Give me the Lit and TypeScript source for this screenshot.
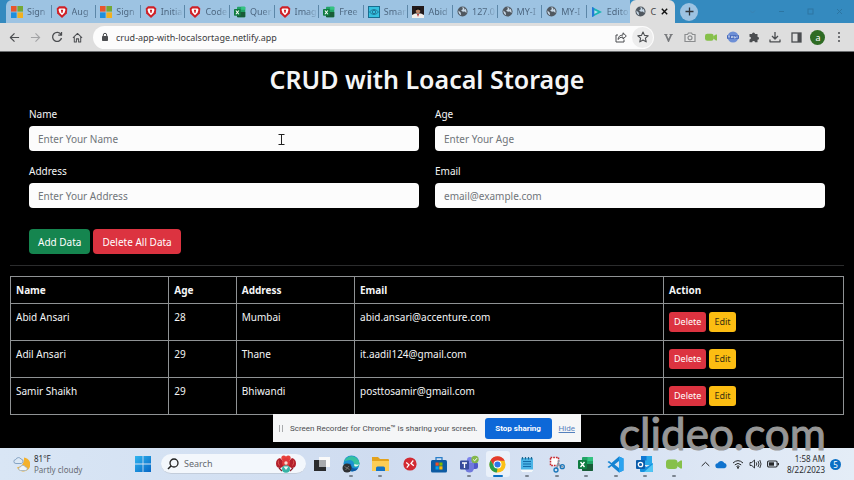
import { LitElement, html, svg, css, nothing } from "lit";
import { customElement } from "lit/decorators.js";
import { classMap } from "lit/directives/class-map.js";

const icon = (w: number, h: number, body: unknown, box = `0 0 ${w} ${h}`) =>
  html`<svg width=${w} height=${h} viewBox=${box} fill="none" aria-hidden="true">${body}</svg>`;

const microsoft = () => icon(12, 12, svg`
  <rect x="0" y="0" width="5.6" height="5.6" fill="#e8552d"/><rect x="6.4" y="0" width="5.6" height="5.6" fill="#74a835"/>
  <rect x="0" y="6.4" width="5.6" height="5.6" fill="#1f8fdc"/><rect x="6.4" y="6.4" width="5.6" height="5.6" fill="#f2b01e"/>`);
const brave = () => icon(12, 12, svg`
  <path d="M3 .3h6l2.300 2.200-.5 4.900L6 11.900 1.200 7.400.7 2.500z" fill="#cf2027"/>
  <path d="M3.400 2.600h5.200l.9 1.200-1 3L6 9.200 3.500 6.800 2.500 3.800z" fill="#fff"/><path d="M4.800 3.800h2.400L6.500 7h-1z" fill="#cf2027"/>`);
const excel = (s: number) => icon(s, s, svg`
  <rect x="4" y="1" width="11" height="14" rx="1" fill="#21a366"/><path d="M9.500 1H14a1 1 0 0 1 1 1v3H9.500z" fill="#33c481"/>
  <path d="M4 8h11v6a1 1 0 0 1-1 1H5a1 1 0 0 1-1-1z" fill="#185c37"/><rect x="0" y="4" width="9" height="9" rx="1" fill="#107c41"/>
  <path d="M2.500 6l4 5M6.500 6l-4 5" stroke="#fff" stroke-width="1.400"/>`, "0 0 16 16");
const smart = () => icon(12, 12, svg`
  <rect x=".5" y=".5" width="11" height="11" fill="#35c0df" stroke="#176e91"/>
  <path d="M1.500 6Q6 1 10.500 6 6 11 1.500 6z" stroke="#1d6687" stroke-width=".8"/><circle cx="6" cy="6" r="1.700" stroke="#1d6687" stroke-width=".8"/>`);
const photo = () => icon(12, 12, svg`
  <rect width="12" height="12" fill="#221a1b"/><path d="M0 12V9l3-1.500h6L12 9v3z" fill="#f2efec"/>
  <circle cx="6" cy="5" r="2.300" fill="#b98468"/><path d="M3.500 4.500Q3 2 6 2t2.500 2.500L6 3.500z" fill="#111"/><path d="M5 8h2l-1 3z" fill="#a22"/>`);
const globe = () => icon(11, 11, svg`
  <circle cx="6" cy="6" r="5.500" fill="#505860"/>
  <path d="M1.500 5l2.500 2.200.5 2.800Q1.500 9 1.500 5zM5.500 1.400l1 1.800L4.500 5l2 1.300 2-.2 1.800 1.400Q10.800 5 9.300 3L7.800 4 8 1.800z" fill="#c8d8e6"/>`, "0 0 12 12");
const clip = () => icon(12, 12, svg`
  <path d="M1 1l10 5-10 5z" fill="#19b6b4"/><path d="M3.200 4.200L7 6 3.200 7.900z" fill="#b7e3f0"/><path d="M1 1v10l2.200-1V2z" fill="#2777d8"/>`);

const line = (body: unknown, s = 12) =>
  icon(s, s, svg`<g stroke="#4b4d50" stroke-width="1.300" stroke-linejoin="round">${body}</g>`, "0 0 12 12");
const back = () => line(svg`<path d="M11 6H1.800M6 1.500L1.500 6 6 10.500"/>`, 11);
const forward = () => icon(11, 11, svg`<path d="M1 6h9.200M6 1.500L10.500 6 6 10.500" stroke="#a2a3a5" stroke-width="1.200"/>`, "0 0 12 12");
const reload = () => line(svg`<path d="M10 3.600A4.500 4.500 0 1 0 10.500 7M10.500 1v3.200H7.200"/>`);
const home = () => line(svg`<path d="M2.500 5.500v5.300h2.300V7.500h2.400v3.300h2.300V5.500M1 6.300l5-4.700 5 4.700" stroke-width="1.100"/>`, 11);
const lock = () => icon(8, 10, svg`<rect x="1" y="4" width="6" height="5" rx=".8" fill="#4c4e51"/><path d="M2.300 4.500V3a1.700 1.700 0 0 1 3.400 0v1.500" stroke="#4c4e51"/>`);
const share = () => line(svg`<path d="M3 4H1v7h8V8.500M3 8.500Q3.300 4.200 8 4V1.800L11.300 5 8 8V6Q4.500 6 3 8.500z" stroke-width="1"/>`);
const star = () => line(svg`<path d="M6 1l1.500 3.400 3.700.4-2.800 2.400.8 3.700L6 9l-3.200 1.900.8-3.700L.8 4.800l3.700-.4z" stroke-width="1.100"/>`);
const vee = () => icon(9, 9, svg`<path d="M0 1h4v1H3l2 4.500L7 2H6V1h4v1H9L5.500 10h-1L1 2H0z" fill="#77797c"/>`, "0 0 10 10");
const camera = () => icon(12, 12, svg`<path d="M1 3.500h2.500L4.500 2h3l1 1.500H11v7H1z" fill="#e5e5e5" stroke="#8a8c8e" stroke-width="1.200"/><circle cx="6" cy="6.800" r="2" stroke="#8a8c8e" stroke-width="1.200"/>`);
const cam = (w: number) => icon(w, w, svg`<rect x="0" y="3.500" width="11.500" height="9.500" rx="3" fill="#86c04a"/><path d="M11 7l3.500-2.500h1.500v8h-1.500L11 10z" fill="#86c04a"/>`, "0 0 16 16");
const badge = () => icon(12, 12, svg`<circle cx="6" cy="6" r="5.500" fill="#6d8fd6"/><path d="M0 4.200h12v3.600H0z" fill="#4568bb"/><path d="M1 5h2M2 5v2.300M4.500 7V5.400h1.200V7M7.200 5v2h1.200V5.700M10 4.700V7" stroke="#dce6f8" stroke-width=".8"/>`);
const puzzle = () => icon(12, 12, svg`<path d="M1.500 3H4a1.500 1.500 0 1 1 3 0h2.500v2.700a1.500 1.500 0 1 1 0 3v2.600H7a1.400 1.400 0 0 0-2.800 0H1.500V8.500a1.400 1.400 0 0 0 0-2.800z" fill="#4b4d50"/>`);
const download = () => line(svg`<path d="M6 1v6.500M3 5l3 3 3-3M1 8.500v2.300h10V8.500"/>`);
const panel = () => icon(11, 11, svg`<rect x="1" y="1" width="9" height="9" stroke="#4b4d50" stroke-width="1.300"/><rect x="6.500" y="1" width="3.500" height="9" fill="#4b4d50"/>`);
const dots = () => icon(4, 12, svg`<g fill="#4b4d50"><circle cx="2" cy="2" r="1"/><circle cx="2" cy="6" r="1"/><circle cx="2" cy="10" r="1"/></g>`);

const weather = () => icon(18, 18, svg`
  <path d="M12 2.500A7 7 0 1 1 5 12.500Q12.500 11 12 2.500z" fill="#f4b12c"/>
  <path d="M4 8.500a2 2 0 0 1-.2-4A2.900 2.900 0 0 1 9 4a2.300 2.300 0 0 1 .3 4.500z" fill="#dbe8f5" stroke="#7d9cbd" stroke-width=".9"/>
  <path d="M8.500 15.500a1.800 1.800 0 0 1 0-3.600 2.600 2.600 0 0 1 4.800 0 1.800 1.800 0 0 1 .2 3.600z" fill="#eef4fa" stroke="#9db3c9" stroke-width=".8"/>`);
const windows = () => icon(16, 16, svg`<defs><linearGradient id="w" x2="1" y2="1"><stop stop-color="#31b5ef"/><stop offset="1" stop-color="#0667c6"/></linearGradient></defs>
  <path d="M0 0h7.600v7.600H0zM8.400 0H16v7.600H8.400zM0 8.400h7.600V16H0zM8.400 8.400H16V16H8.400z" fill="url(#w)"/>`);
const magnifier = () => icon(12, 12, svg`<circle cx="7" cy="5" r="4" stroke="#222" stroke-width="1.300"/><path d="M4.200 7.800L1 11" stroke="#222" stroke-width="1.500"/>`);
const lobster = () => icon(20, 18, svg`
  <path d="M4 3Q0 4 0 8.500T4.500 13L8 11V7zM16 3q4 1 4 5.500T15.500 13L12 11V7z" fill="#b3202b"/>
  <path d="M2.500 5.500Q1.500 8 3.500 10.500M17.500 5.500q1 2.500-1 5" stroke="#d9534f" stroke-width="1"/>
  <path d="M3 13l3 3M17 13l-3 3" stroke="#8b1c28" stroke-width="1.300"/>
  <circle cx="7.800" cy="3" r="2.500" fill="#e8413b"/><circle cx="12.200" cy="3" r="2.500" fill="#e8413b"/>
  <ellipse cx="10" cy="7.500" rx="4" ry="4.500" fill="#e0393a"/><circle cx="10" cy="8" r="1.700" fill="#f7dcd2"/>
  <ellipse cx="10" cy="14" rx="4" ry="3.800" fill="#35b3a5"/><path d="M7.500 11.500h5l-2.500 3.500z" fill="#eaf6f4"/>`);
const taskview = () => icon(16, 16, svg`<rect x="5" y="1" width="11" height="10" fill="#fafafa"/><rect x="0" y="4" width="12" height="11" fill="#2a2b2d"/><rect x="5" y="4" width="7" height="7" fill="#a9abae"/>`);
const edge = () => icon(18, 18, svg`
  <circle cx="9.500" cy="8.500" r="8" fill="#1c8fd2"/><path d="M2 6.500A8 8 0 0 1 17.500 8.500q-.5 4-5 3.500-1.500-.5-.5-2.500Q12 5.500 8 5q-3.500 0-6 1.500z" fill="#35c1a0"/>
  <path d="M7 8.500Q5 14 10 16.500 15 16 16 13q-7 2-7-4z" fill="#0c59a4"/><path d="M12.500 9Q11.500 11 14 11.500q2.500-.3 3-2.500Q15.500 10.500 12.500 9z" fill="#e6f3fa"/>
  <circle cx="5" cy="13" r="4.500" fill="#2e3033"/><path d="M2.500 11.500l5 3M3.500 15l3.500-4" stroke="#777" stroke-width=".9"/>`);
const folder = () => icon(17, 16, svg`<path d="M0 1h6l2 2h8a1 1 0 0 1 1 1v10a1 1 0 0 1-1 1H1a1 1 0 0 1-1-1z" fill="#e3a21c"/><path d="M0 5h17v9a1 1 0 0 1-1 1H1a1 1 0 0 1-1-1z" fill="#fccd55"/><path d="M4 15v-3a1.500 1.500 0 0 1 1.500-1.500h6A1.500 1.500 0 0 1 13 12v3z" fill="#1273c4"/>`);
const remote = () => icon(14, 14, svg`<circle cx="7" cy="7" r="6.600" fill="#d22a32"/><path d="M3.200 5.500L6 7.800 3.800 10.600M10.800 8.700L8 6.300 10.300 3.500" stroke="#fff" stroke-width="1.300"/>`);
const store = () => icon(16, 17, svg`<path d="M5 4.500V1.700h6v2.800" stroke="#2a7fc9" stroke-width="1.300"/><rect y="4" width="16" height="12.500" rx="1.500" fill="#0d5ba3"/>
  <path d="M4.500 6.500h3.200v3.200H4.500z" fill="#f25022"/><path d="M8.300 6.500h3.200v3.200H8.300z" fill="#7fba00"/><path d="M4.500 10.300h3.200v3.200H4.500z" fill="#00a4ef"/><path d="M8.300 10.300h3.200v3.200H8.300z" fill="#ffb900"/>`);
const teams = () => icon(20, 18, svg`<circle cx="11" cy="5" r="3" fill="#7b83eb"/><rect x="12" y="7" width="7" height="7" rx="2.500" fill="#5059c9"/><path d="M6 8h9v5a4.500 4.500 0 0 1-9 0z" fill="#7079dc"/><rect x="1" y="5.500" width="9" height="9" rx="1" fill="#374a9b"/><path d="M3 8h5M5.500 8v5" stroke="#fff" stroke-width="1.300"/><circle cx="16" cy="4.500" r="3.700" fill="#84b84c"/><path d="M14.200 4.500l1.400 1.400 2.400-2.700" stroke="#fff"/>`);
const chrome = () => icon(17, 17, svg`<circle cx="10" cy="10" r="9.500" fill="#fbc116"/><path d="M1.800 5.200A9.500 9.500 0 0 1 18.500 5.500H10L5.800 12z" fill="#e33b2e"/><path d="M1.800 5.200L6.300 12.300 10 14.500l-.8 5A9.500 9.500 0 0 1 1.800 5.200z" fill="#2a9e4b"/><circle cx="10" cy="10" r="4.700" fill="#fff"/><circle cx="10" cy="10" r="3.600" fill="#3077e8"/>`, "0 0 20 20");
const notepad = () => icon(14, 17, svg`<rect x="1" y="2" width="12" height="14" rx="1" fill="#4bb4e6"/><path d="M3 5.500h8M3 8h8M3 10.500h8" stroke="#146ba8"/><path d="M2.500 1v2.500M5.500 1v2.500M8.500 1v2.500M11.500 1v2.500" stroke="#20658d" stroke-width="1.200"/><path d="M1 13.500h12V15a1 1 0 0 1-1 1H2a1 1 0 0 1-1-1z" fill="#f4f7fa"/>`);
const snip = () => icon(16, 17, svg`<rect x="1.500" y="1.500" width="8" height="8" fill="#fff" stroke="#c8292f" stroke-width="1.500" stroke-dasharray="1.700 1"/><path d="M8 8l6 3M10 4L7.500 13" stroke="#8c9aa8" stroke-width="1.400"/><circle cx="7" cy="14" r="2" stroke="#1976b9" stroke-width="1.300"/><circle cx="13.300" cy="10.700" r="2" stroke="#1976b9" stroke-width="1.300"/>`);
const code = () => icon(17, 17, svg`<path d="M12 .5l4.500 2v12L12 16.500 4.500 10 2 12 .5 11 4 8.500.5 6 2 5l2.500 2zM12 5L7.500 8.500 12 12z" fill="#1583d2" fill-rule="evenodd"/><path d="M12 .5l4.500 2v12L12 16.500z" fill="#2aa3f0"/>`);
const outlook = () => icon(17, 16, svg`<rect x="5" y="0" width="11" height="9" fill="#28a8ea"/><path d="M5 0h5.500v4.500H5z" fill="#0f78d4"/><path d="M4 7l6.500 4L17 7v8a1 1 0 0 1-1 1H5a1 1 0 0 1-1-1z" fill="#1490df"/><path d="M17 8L8 16h8a1 1 0 0 0 1-1z" fill="#50c5f3"/><rect y="4" width="9" height="9" rx="1" fill="#0a5cab"/><circle cx="4.500" cy="8.500" r="2.200" stroke="#fff" stroke-width="1.300"/>`);
const chevron = () => icon(9, 6, svg`<path d="M.7 5l3.800-3.700L8.300 5" stroke="#252729"/>`);
const cloud = () => icon(12, 9, svg`<path d="M3 8.300a2.500 2.500 0 0 1-.3-5A3.600 3.600 0 0 1 9.300 3a2.700 2.700 0 0 1 .2 5.300z" fill="#1073ce"/>`);
const wifi = () => icon(12, 10, svg`<g stroke="#252729"><path d="M1 4Q6-.7 11 4M2.800 5.900Q6 2.900 9.200 5.900M4.500 7.500Q6 6.200 7.500 7.500"/></g><circle cx="6" cy="8.700" r="1" fill="#252729"/>`);
const volume = () => icon(13, 10, svg`<g stroke="#252729"><path d="M1 3.500h1.800L5.500 1v8L2.800 6.500H1zM7.200 3.300q1.200 1.700 0 3.400M9 2q2 3 0 6M10.800 1q2.500 4 0 8" stroke-width=".9"/></g>`);
const battery = () => icon(12, 8, svg`<rect x=".6" y="1" width="9.500" height="6" rx="1.200" stroke="#252729" stroke-width="1.100"/><rect x="2" y="2.300" width="5" height="3.400" fill="#252729"/><path d="M11.300 3v2.200" stroke="#252729" stroke-width="1.300"/>`);

const tabs: [string, () => unknown][] = [
  ["Sign", microsoft], ["Aug", brave], ["Sign", microsoft], ["Initia", brave], ["Code", brave],
  ["Quer", () => excel(12)], ["Imag", brave], ["Free", () => excel(12)], ["Smar", smart], ["Abid", photo],
  ["127.0", globe], ["MY-I", globe], ["MY-I", globe], ["Edito", clip],
];

const apps: { name: string; draw: () => unknown; running?: boolean; active?: boolean }[] = [
  { name: "Task view", draw: taskview },
  { name: "Edge", draw: edge, running: true },
  { name: "File Explorer", draw: folder, running: true },
  { name: "Remote", draw: remote },
  { name: "Store", draw: store },
  { name: "Teams", draw: teams, running: true },
  { name: "Chrome", draw: chrome, active: true },
  { name: "Notepad", draw: notepad, running: true },
  { name: "Snipping Tool", draw: snip, running: true },
  { name: "Excel", draw: () => excel(16), running: true },
  { name: "Code", draw: code, running: true },
  { name: "Outlook", draw: outlook, running: true },
  { name: "Recorder", draw: () => cam(16), running: true },
];

const reset = css`
  * { box-sizing: border-box; }
  button, input { font: inherit; color: inherit; border: 0; padding: 0; margin: 0; background: none; }
  svg { display: block; flex: none; }
`;

@customElement("browser-chrome")
export class BrowserChrome extends LitElement {
  static styles = [reset, css`
    :host { display: block; font-size: 9px; color: #4d6780; }
    .strip { display: flex; height: 23px; background: #348abf; }
    .tabs { flex: 1; display: grid; grid-template-columns: repeat(15, 1fr); padding-left: 6px; min-width: 0; }
    .tab { min-width: 0; display: flex; align-items: center; gap: 4px; padding: 0 0 0 5px; background: #9dc3e2; position: relative; }
    .tab + .tab::before { content: ""; position: absolute; left: 0; top: 5px; height: 13px; width: 1px; background: #5c87a8; }
    .tab:first-child { border-radius: 6px 0 0 0; }
    .name { flex: 1; white-space: nowrap; text-align: left; -webkit-mask-image: linear-gradient(90deg, #000 50%, transparent); mask-image: linear-gradient(90deg, #000 50%, transparent); }
    .tab.current { background: #dedede; color: #444; border-radius: 6px 6px 0 0; padding-right: 7px; }
    .tab.current .name { -webkit-mask-image: none; mask-image: none; }
    .tab.current::before { display: none; }
    .window { flex: none; width: 179px; display: flex; align-items: center; padding: 0 11px 0 5px; justify-content: space-between; }
    .plus { width: 18px; height: 18px; border-radius: 50%; background: #9dc3e2; display: grid; place-items: center; }
    .controls { display: flex; gap: 22px; }
    .bar { display: flex; align-items: center; height: 29px; background: #dedede; border-bottom: 1px solid #6b6d6f; padding: 0 4px; }
    .nav { display: flex; }
    .nav button { height: 24px; width: 21px; display: grid; place-items: center; }
    .omni { flex: 1; display: flex; align-items: center; height: 23px; margin-left: 5px; padding: 0 1px 0 8px; border-radius: 12px; background: #fcfcfc; gap: 7px; }
    .url { flex: 1; min-width: 0; color: #3a3b3d; height: 20px; outline: none; }
    .omni button { height: 21px; width: 21px; border-radius: 50%; display: grid; place-items: center; margin-left: -6px; }
    .omni button.mark { background: #ededed; }
    .tools { flex: none; width: 192px; margin-left: 4px; display: grid; grid-template-columns: repeat(9, 1fr); place-items: center; }
    .tools button { height: 24px; display: grid; place-items: center; }
    .tools .me { width: 15px; height: 15px; border-radius: 50%; background: #2e6b24; color: #fff; }
  `];

  render() {
    const tool = (label: string, body: unknown) => html`<button aria-label=${label}>${body}</button>`;
    return html`
      <div class="strip">
        <div class="tabs">
          ${tabs.map(([name, draw]) => html`<button class="tab">${draw()}<span class="name">${name}</span></button>`)}
          <button class="tab current">${globe()}<span class="name">C</span>
            ${icon(7, 7, svg`<path d="M.8.8l5.400 5.400M6.200.8L.8 6.200" stroke="#111" stroke-width="1.400"/>`)}</button>
        </div>
        <div class="window">
          <button class="plus" aria-label="New tab">${icon(9, 9, svg`<path d="M4.500.5v8M.5 4.500h8" stroke="#30343a" stroke-width="1.300"/>`)}</button>
          <div class="controls">
            ${icon(7, 7, svg`<path d="M1 2.500L3.500 5 6 2.500" stroke="#3a83b3"/>`)}
            ${icon(7, 7, svg`<path d="M1 3.500h5" stroke="#2c75a2"/>`)}
            ${icon(7, 7, svg`<rect x="1" y="1" width="5" height="5" stroke="#2c75a2"/>`)}
            ${icon(7, 7, svg`<path d="M1 1l5 5M6 1L1 6" stroke="#2c75a2"/>`)}
          </div>
        </div>
      </div>
      <div class="bar">
        <div class="nav">${tool("Back", back())}${tool("Forward", forward())}${tool("Reload", reload())}${tool("Home", home())}</div>
        <div class="omni">
          ${lock()}<input class="url" aria-label="Address" value="crud-app-with-localsortage.netlify.app" />
          ${tool("Share", share())}<button class="mark" aria-label="Bookmark">${star()}</button>
        </div>
        <div class="tools">
          ${tool("V", vee())}${tool("Screenshot", camera())}${tool("Recorder", cam(12))}${tool("Zoom", badge())}
          ${tool("Extensions", puzzle())}${tool("Downloads", download())}${tool("Side panel", panel())}
          <button class="me">a</button>${tool("Menu", dots())}
        </div>
      </div>`;
  }
}

@customElement("crud-page")
export class CrudPage extends LitElement {
  static styles = [reset, css`
    :host { display: block; background: #000; color: #f4f5f6; font-size: 10px; line-height: 16px; padding: 10px 10px 32px; }
    h1 { margin: 0 0 10px; font-size: 25px; line-height: 34px; font-weight: 600; text-align: center; }
    form { padding: 0 19px; }
    .fields { display: grid; grid-template-columns: 1fr 1fr; gap: 12px 16px; }
    .field { display: flex; flex-direction: column; gap: 4px; }
    .field input { height: 25px; padding: 0 9px; border-radius: 4px; background: #fcfcfc; color: #212529; }
    .field input::placeholder { color: #70757a; opacity: 1; }
    .actions { display: flex; gap: 3px; margin-top: 21px; }
    .actions button { height: 25px; padding: 0 9px; border-radius: 4px; color: #fff; }
    .actions .add { background: #15854f; }
    .actions .clear, .del { background: #dc3340; color: #fff; }
    hr { border: 0; height: 1px; margin: 11px 0 10px; background: #2b2c2d; }
    table { width: 100%; border-collapse: collapse; table-layout: fixed; }
    th, td { border: 1px solid #8f9294; padding: 5px; text-align: left; vertical-align: top; }
    th { font-weight: 700; }
    th:nth-child(1) { width: 19%; } th:nth-child(2) { width: 8.1%; } th:nth-child(3) { width: 14.2%; } th:nth-child(4) { width: 37.1%; }
    td.act { padding: 8px 5px; }
    .pair { display: flex; gap: 3px; }
    .pair button { height: 20px; padding: 0 5px; border-radius: 3px; font-size: 9px; }
    .edit { background: #fcbd12; color: #3a3010; }
  `];

  private people = [
    ["Abid Ansari", "28", "Mumbai", "abid.ansari@accenture.com"],
    ["Adil Ansari", "29", "Thane", "it.aadil124@gmail.com"],
    ["Samir Shaikh", "29", "Bhiwandi", "posttosamir@gmail.com"],
  ];

  private fields = [
    ["name", "Name", "Enter Your Name"], ["age", "Age", "Enter Your Age"],
    ["address", "Address", "Enter Your Address"], ["email", "Email", "email@example.com"],
  ];

  render() {
    return html`
      <h1>CRUD with Loacal Storage</h1>
      <form @submit=${(e: Event) => e.preventDefault()}>
        <div class="fields">
          ${this.fields.map(([id, label, hint]) => html`
            <div class="field"><label for=${id}>${label}</label><input id=${id} placeholder=${hint} /></div>`)}
        </div>
        <div class="actions"><button class="add">Add Data</button><button class="clear" type="button">Delete All Data</button></div>
      </form>
      <hr />
      <table>
        <thead><tr>${["Name", "Age", "Address", "Email", "Action"].map((h) => html`<th>${h}</th>`)}</tr></thead>
        <tbody>
          ${this.people.map((row) => html`<tr>${row.map((c) => html`<td>${c}</td>`)}
            <td class="act"><div class="pair"><button class="del">Delete</button><button class="edit">Edit</button></div></td></tr>`)}
        </tbody>
      </table>`;
  }
}

@customElement("task-bar")
export class TaskBar extends LitElement {
  static styles = [reset, css`
    :host { display: flex; align-items: center; height: 32px; background: linear-gradient(90deg, #d9e6f5, #cfdcf0 45%, #dbe5f4 80%, #e4edf7); color: #2b2d30; font-size: 8px; line-height: 11px; }
    .weather { flex: none; width: 135px; display: flex; align-items: center; gap: 4px; padding-left: 12px; }
    .weather p, .clock p { margin: 0; }
    .dim { color: #686d74; }
    .search { flex: none; width: 145px; height: 20px; margin: 0 1px 0 10px; padding: 0 10px 0 6px; display: flex; align-items: center; gap: 5px; border-radius: 10px; background: #f3f7fc; border-bottom: 1px solid #c3cddb; }
    .search input { flex: 1; min-width: 0; font-size: 9px; outline: none; }
    .search input::placeholder { color: #65696f; opacity: 1; }
    .apps { flex: 1; display: grid; grid-template-columns: repeat(13, 1fr); justify-items: center; }
    .app { position: relative; width: 24px; height: 26px; display: grid; place-items: center; border-radius: 3px; }
    .app.running::after, .app.active::after { content: ""; position: absolute; bottom: 0; left: 10px; width: 4px; height: 2px; border-radius: 1px; background: #7b8490; }
    .app.active { background: #eaf1fa; }
    .app.active::after { left: 7px; width: 10px; background: #0a6fc4; }
    .tray { flex: none; display: flex; align-items: center; gap: 5px; width: 78px; margin-left: 12px; }
    .clock { flex: none; width: 46px; text-align: right; }
    .count { flex: none; width: 11px; height: 11px; margin: 0 13px 0 5px; border-radius: 50%; background: #0a6fc4; color: #fff; text-align: center; }
  `];

  render() {
    return html`
      <div class="weather">${weather()}<div><p>81°F</p><p class="dim">Partly cloudy</p></div></div>
      <button aria-label="Start">${windows()}</button>
      <div class="search">${magnifier()}<input aria-label="Search" placeholder="Search" />${lobster()}</div>
      <div class="apps">
        ${apps.map((a) => html`<button aria-label=${a.name} class=${classMap({ app: true, running: !!a.running, active: !!a.active })}>${a.draw() ?? nothing}</button>`)}
      </div>
      <div class="tray">${chevron()}${cloud()}${wifi()}${volume()}${battery()}</div>
      <div class="clock"><p>1:58 AM</p><p>8/22/2023</p></div>
      <div class="count">5</div>`;
  }
}

@customElement("app-root")
export class AppRoot extends LitElement {
  static styles = [reset, css`
    :host { position: relative; display: flex; flex-direction: column; min-height: 100vh; overflow: hidden; font-family: "Noto Sans", "Open Sans", sans-serif; }
    .view { flex: 1; position: relative; display: flex; }
    crud-page { flex: 1; }
    .sharing { position: absolute; left: 50%; bottom: 6px; transform: translateX(-50%); height: 28px; width: 308px; display: flex; align-items: center; padding: 0 6px; background: #f5f6f7; color: #4b4d50; font-family: Roboto, sans-serif; font-size: 8px; white-space: nowrap; }
    .grip { width: 4px; height: 7px; border: solid #a9abad; border-width: 0 1px; margin-right: 7px; }
    .sharing span { flex: 1; }
    .stop { height: 21px; width: 67px; border-radius: 3px; background: #0d68d8; color: #fff; font-weight: 700; }
    .sharing a { color: #5581bd; margin-left: 7px; }
    .caret { position: absolute; left: 277px; top: 81px; }
    .mark { position: absolute; right: 28px; bottom: 25px; font: 44px/44px Lato, sans-serif; color: #969696; -webkit-text-stroke: 1px #969696; }
  `];

  render() {
    return html`
      <browser-chrome></browser-chrome>
      <div class="view">
        <crud-page></crud-page>
        <div class="caret">${icon(9, 13, svg`<path d="M1.500 1.500h6M1.500 11.500h6M4.500 1.500v10" stroke="#222"/>`)}</div>
        <div class="sharing"><i class="grip"></i><span>Screen Recorder for Chrome™ is sharing your screen.</span>
          <button class="stop">Stop sharing</button><a href="#hide">Hide</a></div>
      </div>
      <task-bar></task-bar>
      <div class="mark">clideo.com</div>`;
  }
}
